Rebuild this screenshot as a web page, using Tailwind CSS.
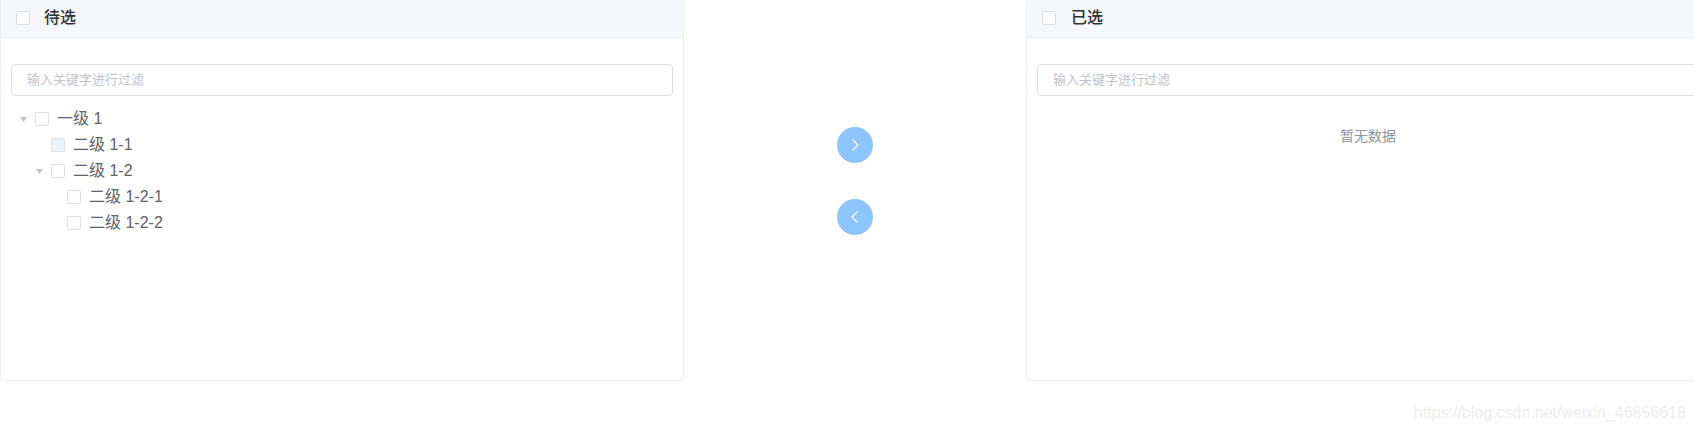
<!DOCTYPE html>
<html lang="zh">
<head>
<meta charset="utf-8">
<script src="https://cdn.jsdelivr.net/npm/@tailwindcss/browser@4"></script>
</head>
<body class="bg-white">
<div class="relative w-[1694px] h-[431px] overflow-hidden font-['Liberation_Sans','Noto_Sans_CJK_SC',sans-serif]">
  <div class="flex w-[1736px] -mt-[3px]">
    <!-- left panel -->
    <section class="w-[684px] h-[384px] shrink-0 border border-[#ebeef5] rounded-[4px] overflow-hidden">
      <header class="h-10 flex items-center pl-[15px] bg-[#f5f7fa] border-b border-[#ebeef5]">
        <span class="w-[14px] h-[14px] bg-white border border-[#dcdfe6] rounded-[2px]"></span>
        <span class="ml-[14px] text-base font-medium text-[#303133]">待选</span>
      </header>
      <div class="px-[10px] pt-[26px]">
        <div class="h-8 flex items-center pl-[15px] border border-[#dcdfe6] rounded-[4px] text-[13px] text-[#c0c4cc]">输入关键字进行过滤</div>
        <ul class="mt-[10px] text-base text-[#606266]">
          <li class="h-[26px] flex items-center pl-[9px]">
            <svg class="w-[7px] h-[5px] shrink-0" viewBox="0 0 8 5" preserveAspectRatio="none"><path d="M0 0h8L4 5z" fill="#c0c4cc"/></svg>
            <span class="ml-[8px] w-[14px] h-[14px] border border-[#dcdfe6] rounded-[2px]"></span>
            <span class="ml-[8px]">一级 1</span>
          </li>
          <li class="h-[26px] flex items-center pl-[40px]">
            <span class="w-[14px] h-[14px] bg-[#edf2fc] border border-[#dcdfe6] rounded-[2px]"></span>
            <span class="ml-[8px]">二级 1-1</span>
          </li>
          <li class="h-[26px] flex items-center pl-[25px]">
            <svg class="w-[7px] h-[5px] shrink-0" viewBox="0 0 8 5" preserveAspectRatio="none"><path d="M0 0h8L4 5z" fill="#c0c4cc"/></svg>
            <span class="ml-[8px] w-[14px] h-[14px] border border-[#dcdfe6] rounded-[2px]"></span>
            <span class="ml-[8px]">二级 1-2</span>
          </li>
          <li class="h-[26px] flex items-center pl-[56px]">
            <span class="w-[14px] h-[14px] border border-[#dcdfe6] rounded-[2px]"></span>
            <span class="ml-[8px]">二级 1-2-1</span>
          </li>
          <li class="h-[26px] flex items-center pl-[56px]">
            <span class="w-[14px] h-[14px] border border-[#dcdfe6] rounded-[2px]"></span>
            <span class="ml-[8px]">二级 1-2-2</span>
          </li>
        </ul>
      </div>
    </section>
    <!-- transfer buttons -->
    <div class="w-[342px] shrink-0 flex flex-col items-center pt-[130px] gap-9">
      <span class="w-9 h-9 rounded-full bg-[#8cc5ff] flex items-center justify-center">
        <svg class="w-[14px] h-[14px]" viewBox="0 0 14 14" fill="none"><path d="M4.500 1.500 10 7l-5.500 5.500" stroke="#fff" stroke-width="1.200"/></svg>
      </span>
      <span class="w-9 h-9 rounded-full bg-[#8cc5ff] flex items-center justify-center">
        <svg class="w-[14px] h-[14px]" viewBox="0 0 14 14" fill="none"><path d="M9.500 1.500 4 7l5.500 5.500" stroke="#fff" stroke-width="1.200"/></svg>
      </span>
    </div>
    <!-- right panel -->
    <section class="w-[684px] h-[384px] shrink-0 border border-[#ebeef5] rounded-[4px] overflow-hidden">
      <header class="h-10 flex items-center pl-[15px] bg-[#f5f7fa] border-b border-[#ebeef5]">
        <span class="w-[14px] h-[14px] bg-white border border-[#dcdfe6] rounded-[2px]"></span>
        <span class="ml-[15px] text-base font-medium text-[#303133]">已选</span>
      </header>
      <div class="px-[10px] pt-[26px]">
        <div class="h-8 flex items-center pl-[15px] border border-[#dcdfe6] rounded-[4px] text-[13px] text-[#c0c4cc]">输入关键字进行过滤</div>
        <p class="mt-[30px] text-center text-sm leading-[20px] text-[#909399]">暂无数据</p>
      </div>
    </section>
  </div>
  <div class="absolute right-[8px] top-[402px] text-[16px] leading-[22px] text-[#ededed]">https://blog.csdn.net/weixin_46856618</div>
</div>
</body>
</html>
